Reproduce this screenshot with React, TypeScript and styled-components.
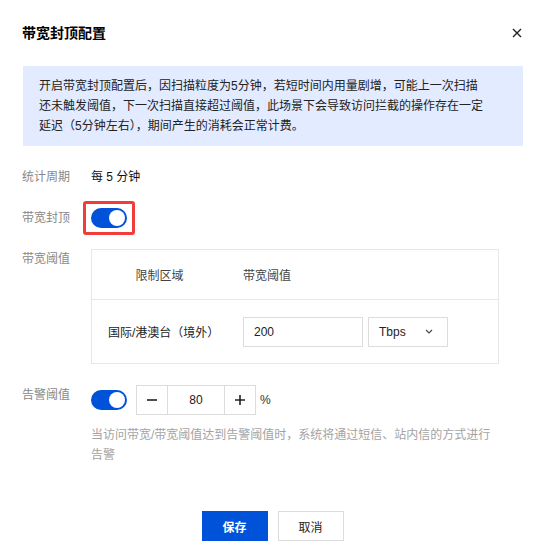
import React, { useState } from 'react';
import styled, { createGlobalStyle } from 'styled-components';

const GlobalStyle = createGlobalStyle`
  html, body {
    margin: 0;
    padding: 0;
    background: #fff;
  }
  body {
    font-family: "Liberation Sans", "Noto Sans CJK SC", sans-serif;
    font-size: 12px;
    color: #333;
  }
  * {
    box-sizing: border-box;
  }
`;

const Dialog = styled.div`
  width: 544px;
  height: 558px;
  padding: 23px 21px 17px 22px;
  display: flex;
  flex-direction: column;
`;

const Header = styled.div`
  display: flex;
  align-items: center;
  justify-content: space-between;
  height: 20px;
`;

const Title = styled.h2`
  margin: 0;
  font-size: 14px;
  font-weight: bold;
  line-height: 20px;
  color: #000;
`;

const Close = styled.button`
  border: 0;
  background: none;
  padding: 0;
  width: 10px;
  height: 10px;
  margin-right: 1px;
  display: flex;
  cursor: pointer;
`;

const Alert = styled.div`
  margin-top: 23px;
  margin-left: 1px;
  background: #e2ebff;
  padding: 10px 36px 10px 16px;
  line-height: 20px;
  font-size: 12px;
  color: #222;
`;

const Form = styled.div`
  margin-top: 21px;
  display: flex;
  flex-direction: column;
  gap: 21px;
`;

const Row = styled.div<{ $center?: boolean }>`
  display: flex;
  align-items: ${(p) => (p.$center ? 'center' : 'flex-start')};
`;

const Label = styled.div`
  width: 69px;
  flex-shrink: 0;
  line-height: 20px;
  color: #888;
`;

const Value = styled.div`
  line-height: 20px;
  color: #111;
`;

const Highlight = styled.span`
  display: inline-flex;
  margin: -7px -8px;
  padding: 4px 5px;
  border: 3px solid #f23b3b;
  border-radius: 3px;
`;

const Switch = styled.button<{ $on: boolean }>`
  position: relative;
  width: 36px;
  height: 20px;
  border: 0;
  padding: 0;
  border-radius: 10px;
  background: ${(p) => (p.$on ? '#0052d9' : '#c5c5c5')};
  cursor: pointer;
  flex-shrink: 0;

  &::after {
    content: '';
    position: absolute;
    top: 2px;
    left: ${(p) => (p.$on ? '18px' : '2px')};
    width: 16px;
    height: 16px;
    border-radius: 50%;
    background: #fff;
  }
`;

const Table = styled.div`
  width: 408px;
  border: 1px solid #e7e7e7;
`;

const TableRow = styled.div<{ $head?: boolean }>`
  display: grid;
  grid-template-columns: 135px 1fr;
  align-items: center;
  height: ${(p) => (p.$head ? '50px' : '63px')};
  border-bottom: ${(p) => (p.$head ? '1px solid #e7e7e7' : '0')};
  color: ${(p) => (p.$head ? '#444' : '#222')};
`;

const Cell = styled.div<{ $align?: string }>`
  padding: 0 16px;
  white-space: nowrap;
  display: flex;
  justify-content: ${(p) => (p.$align === 'center' ? 'center' : 'flex-start')};
  align-items: center;
  gap: 5px;
`;

const Input = styled.input`
  width: 120px;
  height: 30px;
  border: 1px solid #dcdcdc;
  padding: 0 10px;
  font: inherit;
  font-size: 12px;
  color: #222;
  outline: none;
`;

const Select = styled.div`
  width: 80px;
  height: 30px;
  border: 1px solid #dcdcdc;
  padding: 0 14px 0 10px;
  display: flex;
  align-items: center;
  justify-content: space-between;
  color: #222;
`;

const AlertControl = styled.div`
  display: flex;
  flex-direction: column;
  gap: 10px;
`;

const ControlLine = styled.div`
  display: flex;
  align-items: center;
  gap: 9px;
`;

const Stepper = styled.div`
  display: flex;
  height: 30px;
  border: 1px solid #dcdcdc;
`;

const StepButton = styled.button`
  width: 31px;
  border: 0;
  background: #fff;
  padding: 0;
  display: flex;
  align-items: center;
  justify-content: center;
  cursor: pointer;
  &:first-child {
    border-right: 1px solid #dcdcdc;
  }
  &:last-child {
    border-left: 1px solid #dcdcdc;
  }
`;

const StepValue = styled.div`
  width: 56px;
  display: flex;
  align-items: center;
  justify-content: center;
  color: #222;
`;

const Unit = styled.span`
  margin-left: -5px;
  color: #333;
`;

const Help = styled.div`
  max-width: 405px;
  line-height: 20px;
  color: #a3a3a3;
`;

const Footer = styled.div`
  margin-top: auto;
  display: flex;
  justify-content: center;
  gap: 10px;
`;

const Button = styled.button<{ $primary?: boolean }>`
  width: 66px;
  height: 30px;
  font: inherit;
  font-size: 12px;
  font-weight: ${(p) => (p.$primary ? 'bold' : 'normal')};
  border: 1px solid ${(p) => (p.$primary ? '#0052d9' : '#dcdcdc')};
  background: ${(p) => (p.$primary ? '#0052d9' : '#fff')};
  color: ${(p) => (p.$primary ? '#fff' : '#222')};
  cursor: pointer;
`;

const Chevron = () => (
  <svg width="8" height="5" viewBox="0 0 8 5" fill="none">
    <path d="M1 1l3 3 3-3" stroke="#444" strokeWidth="1.1" />
  </svg>
);

const Minus = () => (
  <svg width="10" height="10" viewBox="0 0 10 10">
    <path d="M0 5h10" stroke="#222" strokeWidth="1.6" />
  </svg>
);

const Plus = () => (
  <svg width="10" height="10" viewBox="0 0 10 10">
    <path d="M0 5h10M5 0v10" stroke="#222" strokeWidth="1.6" />
  </svg>
);

export default function App() {
  const [capOn, setCapOn] = useState(true);
  const [warnOn, setWarnOn] = useState(true);
  const [percent, setPercent] = useState(80);

  return (
    <Dialog>
      <GlobalStyle />
      <Header>
        <Title>带宽封顶配置</Title>
        <Close aria-label="关闭">
          <svg width="10" height="10" viewBox="0 0 10 10">
            <path d="M1 1l8 8M9 1l-8 8" stroke="#222" strokeWidth="1.4" />
          </svg>
        </Close>
      </Header>

      <Alert>
        开启带宽封顶配置后，因扫描粒度为5分钟，若短时间内用量剧增，可能上一次扫描还未触发阈值，下一次扫描直接超过阈值，此场景下会导致访问拦截的操作存在一定延迟（5分钟左右），期间产生的消耗会正常计费。
      </Alert>

      <Form>
        <Row>
          <Label>统计周期</Label>
          <Value>每 5 分钟</Value>
        </Row>

        <Row $center>
          <Label>带宽封顶</Label>
          <Highlight>
            <Switch $on={capOn} onClick={() => setCapOn(!capOn)} />
          </Highlight>
        </Row>

        <Row>
          <Label>带宽阈值</Label>
          <Table>
            <TableRow $head>
              <Cell $align="center">限制区域</Cell>
              <Cell>带宽阈值</Cell>
            </TableRow>
            <TableRow>
              <Cell>国际/港澳台（境外）</Cell>
              <Cell>
                <Input defaultValue="200" />
                <Select>
                  <span>Tbps</span>
                  <Chevron />
                </Select>
              </Cell>
            </TableRow>
          </Table>
        </Row>

        <Row>
          <Label>告警阈值</Label>
          <AlertControl>
            <ControlLine>
              <Switch $on={warnOn} onClick={() => setWarnOn(!warnOn)} />
              <Stepper>
                <StepButton onClick={() => setPercent(Math.max(0, percent - 1))}>
                  <Minus />
                </StepButton>
                <StepValue>{percent}</StepValue>
                <StepButton onClick={() => setPercent(Math.min(100, percent + 1))}>
                  <Plus />
                </StepButton>
              </Stepper>
              <Unit>%</Unit>
            </ControlLine>
            <Help>当访问带宽/带宽阈值达到告警阈值时，系统将通过短信、站内信的方式进行告警</Help>
          </AlertControl>
        </Row>
      </Form>

      <Footer>
        <Button $primary>保存</Button>
        <Button>取消</Button>
      </Footer>
    </Dialog>
  );
}
